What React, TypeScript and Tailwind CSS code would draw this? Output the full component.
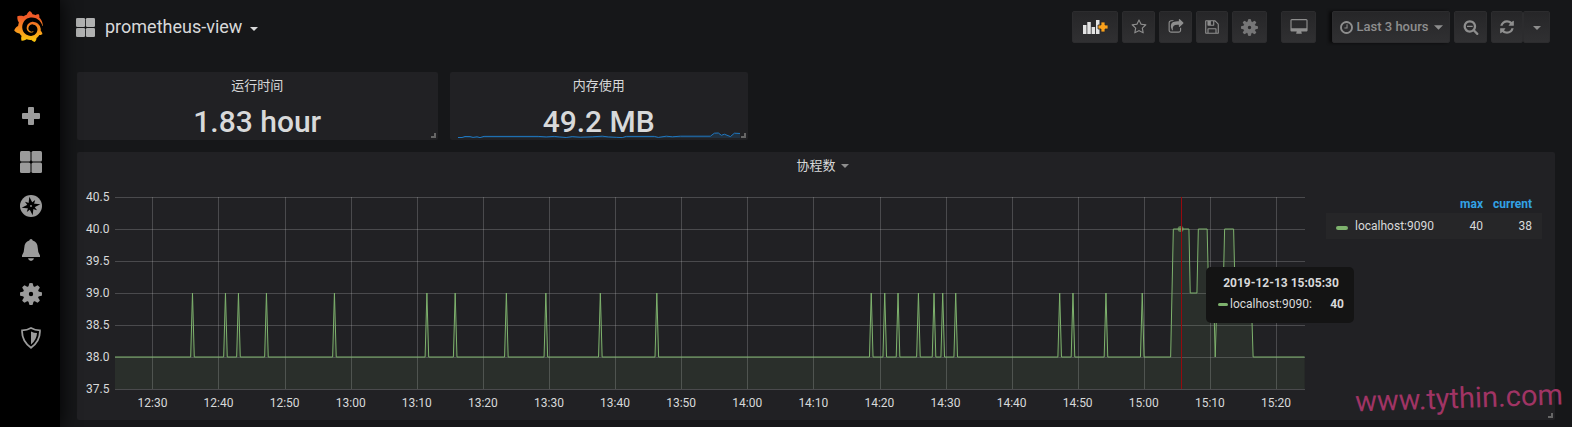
import type { ReactNode } from "react";
import { SiGrafana } from "react-icons/si";

// Plot area: 180 minutes over 1190 units, 37.5 to 40.5 over 192 units
const PLOT_W = 1190;
const PLOT_H = 192;

const Y_TICKS = ["40.5", "40.0", "39.5", "39.0", "38.5", "38.0", "37.5"];
const X_TICKS = [
  "12:30", "12:40", "12:50", "13:00", "13:10", "13:20", "13:30", "13:40", "13:50",
  "14:00", "14:10", "14:20", "14:30", "14:40", "14:50", "15:00", "15:10", "15:20",
];
const X_LINES = [37, 103, 170, 236, 302, 368, 434, 500, 566, 632, 698, 765, 831, 897, 963, 1029, 1095, 1161];

// Short bursts from 38 to 39
const SPIKES = [
  77.5, 110.5, 123.5, 151.5, 219.5, 312, 340.3, 391.5, 431, 485.5, 542,
  756.5, 770, 783.3, 803.7, 819.3, 828, 841, 945, 958.3, 991.3, 1027.6,
];

// The last half hour, where the count goes up to 40
const TAIL: [number, number][] = [
  [1056, 38], [1058.7, 40], [1074.3, 40], [1075.6, 39], [1082.3, 39], [1083.7, 40],
  [1092.5, 40], [1094, 39], [1099, 39], [1100.6, 38], [1102.5, 39], [1108.5, 39],
  [1110, 40], [1119, 40], [1120.5, 39], [1136.5, 39], [1138.5, 38], [PLOT_W, 38],
];

const toY = (value: number) => (40.5 - value) * 64;

const seriesPoints = [
  `0,${toY(38)}`,
  ...SPIKES.map((x) => `${x - 1.8},${toY(38)} ${x},${toY(39)} ${x + 1.8},${toY(38)}`),
  ...TAIL.map(([x, v]) => `${x},${toY(v)}`),
].join(" ");

const STAR =
  "M1201 1004l306-297-422-62-189-382-189 382-422 62 306 297-73 421 378-199 377 199zm527-357q0 22-26 48l-363 354 86 500q1 7 1 20 0 50-41 50-19 0-40-12l-449-236-449 236q-22 12-40 12-21 0-31.500-14.500t-10.500-35.500q0-6 2-20l86-500-364-354q-25-27-25-48 0-37 56-46l502-73 225-455q19-41 49-41t49 41l225 455 502 73q56 9 56 46z";
const SHARE =
  "M1472 989v259q0 119-84.500 203.500t-203.500 84.500h-832q-119 0-203.500-84.500t-84.500-203.500v-832q0-119 84.500-203.500t203.500-84.500h255q13 0 22.500 9.500t9.500 22.500q0 27-26 32-77 26-133 60-10 4-16 4h-112q-66 0-113 47t-47 113v832q0 66 47 113t113 47h832q66 0 113-47t47-113v-214q0-19 18-29 28-13 54-37 16-16 35-8 21 9 21 29zm237-496l-384 384q-18 19-45 19-12 0-25-5-39-17-39-59v-192h-160q-323 0-438 131-119 137-74 473 3 23-20 34-8 2-12 2-16 0-26-13-10-14-21-31t-39.500-68.500-49.500-99.500-38.500-114-17.500-122q0-49 3.500-91t14-90 28-88 47-81.500 68.500-74 94.500-61.500 124.500-48.500 159.500-30.500 196.500-11h160v-192q0-42 39-59 13-5 25-5 26 0 45 19l384 384q19 19 19 45t-19 45z";
const SAVE =
  "M512 1536h768v-384h-768v384zm896 0h128v-896q0-14-10-38.500t-20-34.500l-281-281q-10-10-34-20t-39-10v416q0 40-28 68t-68 28h-576q-40 0-68-28t-28-68v-416h-128v1280h128v-416q0-40 28-68t68-28h832q40 0 68 28t28 68v416zm-384-928v-320q0-13-9.500-22.500t-22.500-9.500h-192q-13 0-22.500 9.500t-9.500 22.500v320q0 13 9.500 22.500t22.500 9.500h192q13 0 22.500-9.500t9.500-22.500zm640 32v928q0 40-28 68t-68 28h-1344q-40 0-68-28t-28-68v-1344q0-40 28-68t68-28h928q40 0 88 20t76 48l280 280q28 28 48 76t20 88z";
const DESKTOP =
  "M1728 992v-832q0-13-9.500-22.500t-22.500-9.500h-1600q-13 0-22.500 9.500t-9.500 22.500v832q0 13 9.500 22.500t22.500 9.500h1600q13 0 22.500-9.500t9.500-22.500zm128-832v1088q0 66-47 113t-113 47h-544q0 37 16 77.500t32 71 16 43.500q0 26-19 45t-45 19h-512q-26 0-45-19t-19-45q0-14 16-44t32-70 16-78h-544q-66 0-113-47t-47-113v-1088q0-66 47-113t113-47h1600q66 0 113 47t47 113z";
const CLOCK =
  "M1024 544v448q0 14-9 23t-23 9h-320q-14 0-23-9t-9-23v-64q0-14 9-23t23-9h224v-352q0-14 9-23t23-9h64q14 0 23 9t9 23zm416 352q0-148-73-273t-198-198-273-73-273 73-198 198-73 273 73 273 198 198 273 73 273-73 198-198 73-273zm224 0q0 209-103 385.500t-279.500 279.500-385.500 103-385.500-103-279.500-279.500-103-385.500 103-385.500 279.500-279.500 385.500-103 385.500 103 279.500 279.500 103 385.500z";
const ZOOM_OUT =
  "M1088 800v64q0 13-9.500 22.500t-22.500 9.500h-576q-13 0-22.500-9.500t-9.500-22.500v-64q0-13 9.500-22.500t22.500-9.500h576q13 0 22.500 9.500t9.500 22.500zm128 32q0-185-131.500-316.500t-316.500-131.500-316.500 131.500-131.500 316.500 131.500 316.500 316.500 131.500 316.500-131.500 131.500-316.500zm512 832q0 53-37.500 90.500t-90.500 37.500q-54 0-90-38l-343-342q-179 124-399 124-143 0-273.500-55.500t-225-150-150-225-55.500-273.500 55.500-273.500 150-225 225-150 273.500-55.500 273.500 55.500 225 150 150 225 55.500 273.500q0 220-124 399l343 343q37 37 37 90z";
const REFRESH =
  "M1639 1056q0 5-1 7-64 268-268 434.500t-478 166.500q-146 0-282.500-55t-243.500-157l-129 129q-19 19-45 19t-45-19-19-45v-448q0-26 19-45t45-19h448q26 0 45 19t19 45-19 45l-137 137q71 66 161 102t187 36q134 0 250-65t186-179q11-17 53-117 8-23 30-23h192q13 0 22.500 9.500t9.500 22.500zm25-800v448q0 26-19 45t-45 19h-448q-26 0-45-19t-19-45 19-45l138-138q-148-137-349-137-134 0-250 65t-186 179q-11 17-53 117-8 23-30 23h-199q-13 0-22.500-9.500t-9.500-22.500v-7q65-268 270-434.500t480-166.500q146 0 284 55.500t245 156.500l130-129q19-19 45-19t45 19 19 45z";

function Glyph({ d, className, viewBox = "0 0 1792 1792" }: { d: string; className: string; viewBox?: string }) {
  return (
    <svg className={className} viewBox={viewBox} fill="currentColor" aria-hidden="true">
      <path d={d} />
    </svg>
  );
}

function Caret({ className }: { className: string }) {
  return (
    <svg className={className} viewBox="0 0 8 4" fill="currentColor" aria-hidden="true">
      <path d="M0 0h8L4 4z" />
    </svg>
  );
}

function GridIcon({ className }: { className: string }) {
  return (
    <svg className={className} viewBox="0 0 22 22" fill="currentColor" aria-hidden="true">
      <rect x="0" y="0" width="10.500" height="10.500" rx="1.500" />
      <rect x="11.500" y="0" width="10.500" height="10.500" rx="1.500" />
      <rect x="0" y="11.500" width="10.500" height="10.500" rx="1.500" />
      <rect x="11.500" y="11.500" width="10.500" height="10.500" rx="1.500" />
    </svg>
  );
}

function GearIcon({ className }: { className: string }) {
  return (
    <svg className={className} viewBox="-11 -11 22 22" fill="currentColor" aria-hidden="true">
      <path
        fillRule="evenodd"
        d="M0-8a8 8 0 1 0 0 16a8 8 0 1 0 0-16zM0-2.200a2.200 2.200 0 1 1 0 4.400a2.200 2.200 0 1 1 0-4.400z"
      />
      {[0, 45, 90, 135, 180, 225, 270, 315].map((angle) => (
        <path key={angle} transform={`rotate(${angle})`} d="M-2.600-7L-1.700-10.800Q0-11.200 1.700-10.800L2.600-7z" />
      ))}
    </svg>
  );
}

function GrafanaLogo() {
  return (
    <>
      <svg className="absolute h-0 w-0" aria-hidden="true">
        <defs>
          <linearGradient id="logo" x1="0" y1="0" x2="0" y2="1">
            <stop offset="0.200" stopColor="#f05a28" />
            <stop offset="0.700" stopColor="#f9a01b" />
            <stop offset="1" stopColor="#fbca0a" />
          </linearGradient>
        </defs>
      </svg>
      <SiGrafana className="h-[31px] w-[31px]" fill="url(#logo)" />
    </>
  );
}

function NavLink({ label, children }: { label: string; children: ReactNode }) {
  return (
    <a href="#" aria-label={label} className="flex h-11 items-center justify-center pl-[2px]">
      {children}
    </a>
  );
}

function Sidebar() {
  return (
    <nav className="z-10 flex w-15 shrink-0 flex-col bg-black text-[#9b9b9b] shadow-[0_0_20px_#000]">
      <a href="#" aria-label="Grafana" className="mb-[42px] flex h-[52px] items-center justify-center pr-1">
        <GrafanaLogo />
      </a>
      <NavLink label="Create">
        <svg className="h-[18px] w-[18px]" viewBox="0 0 18 18" fill="currentColor" aria-hidden="true">
          <path d="M7 0h4q1 0 1 1v5h5q1 0 1 1v4q0 1-1 1h-5v5q0 1-1 1H7q-1 0-1-1v-5H1q-1 0-1-1V7q0-1 1-1h5V1q0-1 1-1z" />
        </svg>
      </NavLink>
      <div className="mt-[2px]">
        <NavLink label="Dashboards">
          <GridIcon className="h-[22px] w-[22px]" />
        </NavLink>
        <NavLink label="Explore">
          <svg className="h-[22px] w-[22px]" viewBox="-11 -11 22 22" aria-hidden="true">
            <circle r="11" fill="currentColor" />
            <g transform="rotate(-10)" fill="#000">
              <path d="M0-9.500L2.200-2.200L9.500 0L2.200 2.200L0 9.500L-2.200 2.200L-9.500 0L-2.200-2.200z" />
              <path d="M5.200-5.200L2.600 0L5.200 5.200L0 2.600L-5.200 5.200L-2.600 0L-5.200-5.200L0-2.600z" />
            </g>
            <circle r="0.900" fill="currentColor" />
          </svg>
        </NavLink>
        <NavLink label="Alerting">
          <svg className="h-[22px] w-[18px]" viewBox="0 0 18 22" fill="currentColor" aria-hidden="true">
            <path d="M9 0Q10.500 0 10.700 1.600Q15.500 3 15.700 8.500Q15.800 13.500 18 16.500V18H0V16.500Q2.200 13.500 2.300 8.500Q2.500 3 7.300 1.600Q7.500 0 9 0z" />
            <path d="M6 19.300H12Q11.500 22 9 22T6 19.300z" />
          </svg>
        </NavLink>
        <NavLink label="Configuration">
          <GearIcon className="h-[22px] w-[22px]" />
        </NavLink>
        <NavLink label="Server Admin">
          <svg className="h-[22px] w-5" viewBox="0 0 20 22" aria-hidden="true">
            <path
              d="M10 1Q14 3.300 18.900 3.300Q19.500 14 10 20.800Q0.500 14 1.100 3.300Q6 3.300 10 1z"
              fill="none"
              stroke="currentColor"
              strokeWidth="1.800"
            />
            <path d="M10 4.500Q13 6 16 6Q15.800 12.500 10 17.500z" fill="currentColor" />
          </svg>
        </NavLink>
      </div>
    </nav>
  );
}

function ToolButton({ label, className, children }: { label: string; className: string; children: ReactNode }) {
  return (
    <button
      type="button"
      aria-label={label}
      className={`flex h-8 items-center justify-center rounded-xs border border-[#2c2c2e] bg-linear-to-b from-[#262628] to-[#303032] text-[#8e8e8e] ${className}`}
    >
      {children}
    </button>
  );
}

function Toolbar() {
  return (
    <header className="flex items-center justify-between pt-[11px] pr-[5px]">
      <button type="button" className="-ml-px flex h-8 items-center text-lg leading-6 text-[#d8d9da]">
        <GridIcon className="mr-[10px] h-[19px] w-[19px] text-[#b0b1b1]" />
        prometheus-view
        <Caret className="mt-1 ml-2 h-1 w-2" />
      </button>

      <div className="flex items-center gap-1">
        <ToolButton label="Add panel" className="w-[46px]">
          <svg className="h-[14px] w-[25px]" viewBox="0 0 25 14" aria-hidden="true">
            <path fill="#e3e3e3" d="M0 5h3.500v9H0zM4.300 2h3.500v12H4.300zM8.600 7h3.500v7H8.600zM13 0h3.500v14H13z" />
            <path
              fill="#f9a01b"
              stroke="#29292b"
              strokeWidth="0.800"
              d="M18 2h4v3h3v4h-3v3h-4V9h-3V5h3z"
            />
          </svg>
        </ToolButton>
        <ToolButton label="Mark as favorite" className="w-[33px]">
          <Glyph d={STAR} className="h-4 w-4" />
        </ToolButton>
        <ToolButton label="Share dashboard" className="w-[33px]">
          <Glyph d={SHARE} className="h-4 w-4" />
        </ToolButton>
        <ToolButton label="Save dashboard" className="w-8">
          <Glyph d={SAVE} className="h-4 w-4" />
        </ToolButton>
        <ToolButton label="Dashboard settings" className="w-[35px]">
          <GearIcon className="h-[17px] w-[17px] text-[#767677]" />
        </ToolButton>
        <ToolButton label="Cycle view mode" className="mx-[10px] w-[35px]">
          <Glyph d={DESKTOP} viewBox="-64 0 1920 1792" className="h-4 w-[18px]" />
        </ToolButton>
        <ToolButton label="Time range" className="ml-[2px] w-[118px] text-[13px] font-medium shadow-[-3px_0_3px_#0a0a0b]">
          <Glyph d={CLOCK} className="mr-[2px] h-[15px] w-[15px]" />
          Last 3 hours
          <Caret className="ml-[5px] h-[5px] w-[9px]" />
        </ToolButton>
        <ToolButton label="Zoom out" className="w-[33px]">
          <Glyph d={ZOOM_OUT} className="h-4 w-4" />
        </ToolButton>
        <div className="flex">
          <ToolButton label="Refresh" className="w-8">
            <Glyph d={REFRESH} className="h-4 w-4" />
          </ToolButton>
          <ToolButton label="Refresh interval" className="w-[27px]">
            <Caret className="mt-px h-1 w-2" />
          </ToolButton>
        </div>
      </div>
    </header>
  );
}

function Panel({ title, className, children }: { title: ReactNode; className: string; children: ReactNode }) {
  return (
    <section className={`relative flex flex-col rounded-xs bg-[#212124] ${className}`}>
      <h2 className="flex h-7 shrink-0 items-center justify-center text-[13px] leading-4">{title}</h2>
      {children}
      {/* resize handle */}
      <span className="absolute right-[2px] bottom-[2px] h-[5px] w-[5px] border-r-2 border-b-2 border-[#666]" />
    </section>
  );
}

function Stat({ children }: { children: ReactNode }) {
  return <p className="relative text-center text-[30px] leading-[44px] font-medium">{children}</p>;
}

function Sparkline() {
  return (
    <svg
      className="absolute inset-x-2 bottom-0 h-2 w-[calc(100%-16px)]"
      viewBox="0 0 282 8"
      preserveAspectRatio="none"
      aria-hidden="true"
    >
      <path
        d="M0 5.500H4L7 4.500L12 4.600L15 5.400L19 4.800L22 5.600L26 4.400H80L88 4.900L96 4.400L101 4.900L108 5.500L114 4.600L122 5.200L134 4.800L144 4.200L150 4.900L158 5.300L164 5.600L168 4.400H196L200 5.400L208 4.200L214 4.800L222 4.200H252L256 1.200L260 1L263 3.300L266 2.200L272 4.600L276 1.200L282 1.500V6H0z"
        fill="rgba(31,120,193,0.180)"
      />
      <path
        d="M0 5.500H4L7 4.500L12 4.600L15 5.400L19 4.800L22 5.600L26 4.400H80L88 4.900L96 4.400L101 4.900L108 5.500L114 4.600L122 5.200L134 4.800L144 4.200L150 4.900L158 5.300L164 5.600L168 4.400H196L200 5.400L208 4.200L214 4.800L222 4.200H252L256 1.200L260 1L263 3.300L266 2.200L272 4.600L276 1.200L282 1.500"
        fill="none"
        stroke="#1f78c1"
        vectorEffect="non-scaling-stroke"
      />
    </svg>
  );
}

function Graph() {
  return (
    <div className="flex min-w-0 flex-1">
      <div className="mt-[10px] flex h-[206px] flex-col justify-between pr-[6px] pl-[9px] text-right text-xs leading-[14px]">
        {Y_TICKS.map((tick) => (
          <span key={tick}>{tick}</span>
        ))}
      </div>
      <div className="relative min-w-0 flex-1 pt-[17px]">
        <svg
          className="block h-[193px] w-full"
          viewBox={`0 0 ${PLOT_W} ${PLOT_H + 1}`}
          preserveAspectRatio="none"
          role="img"
          aria-label="协程数"
        >
          <g fill="rgb(200,200,200)" fillOpacity="0.250" shapeRendering="crispEdges">
            {Y_TICKS.map((tick, i) => (
              <rect key={tick} x="0" y={i * 32} width={PLOT_W} height="1" />
            ))}
            {X_LINES.map((x) => (
              <rect key={x} x={x} y="0" width="1" height={PLOT_H} />
            ))}
          </g>
          <polygon points={`0,${PLOT_H} ${seriesPoints} ${PLOT_W},${PLOT_H}`} fill="#7eb26d" fillOpacity="0.100" />
          <polyline points={seriesPoints} fill="none" stroke="#7eb26d" vectorEffect="non-scaling-stroke" />
          <circle cx="1066" cy={toY(40)} r="3" fill="#7eb26d" fillOpacity="0.600" />
          <rect x="1066" y="0" width="1" height={PLOT_H} fill="#960a0e" shapeRendering="crispEdges" />
        </svg>
        <div className="mr-[-4px] ml-1 grid grid-cols-18 pt-[6px] text-center text-xs leading-[14px]">
          {X_TICKS.map((tick) => (
            <span key={tick}>{tick}</span>
          ))}
        </div>

        <div
          role="tooltip"
          className="absolute top-[87px] right-[-49px] z-10 w-[148px] rounded-[5px] bg-[#141414] pt-2 pr-[10px] pb-[11px] pl-3 text-xs leading-4"
        >
          <p className="text-center font-bold">2019-12-13 15:05:30</p>
          <p className="mt-[5px] flex items-center">
            <span className="mr-[2px] h-[3px] w-[10px] rounded-xs bg-[#7eb26d]" />
            localhost:9090:
            <b className="ml-auto">40</b>
          </p>
        </div>
      </div>
    </div>
  );
}

function Legend() {
  return (
    <table className="mt-[15px] mr-[13px] ml-[21px] w-[216px] self-start text-xs leading-4">
      <thead>
        <tr className="h-[18px] text-right text-[#33a2e5]">
          <td />
          <th scope="col" className="font-bold">max</th>
          <th scope="col" className="pr-[10px] font-bold">current</th>
        </tr>
      </thead>
      <tbody>
        <tr className="h-[26px] bg-[#262628] text-right">
          <th scope="row" className="pl-[10px] text-left font-normal">
            <span className="flex items-center">
              <span className="mt-1 mr-[7px] h-1 w-3 rounded-xs bg-[#7eb26d]" />
              localhost:9090
            </span>
          </th>
          <td className="w-12">40</td>
          <td className="w-[59px] pr-[10px]">38</td>
        </tr>
      </tbody>
    </table>
  );
}

export default function App() {
  return (
    <div className="flex min-h-screen overflow-hidden bg-[#161719] font-['Roboto','Noto_Sans_CJK_SC',sans-serif] text-[#d8d9da]">
      <Sidebar />
      <main className="relative min-w-0 flex-1 pr-[17px] pb-[7px] pl-[17px]">
        <Toolbar />
        <div className="mt-[29px] grid grid-cols-24 gap-3">
          <Panel title="运行时间" className="col-span-6 h-17">
            <Stat>1.83 hour</Stat>
          </Panel>
          <Panel title="内存使用" className="col-span-5 h-17">
            <Sparkline />
            <Stat>49.2 MB</Stat>
          </Panel>
          <Panel
            title={
              <>
                协程数
                <Caret className="-mr-[13px] ml-[5px] h-1 w-2 text-[#8e8e8e]" />
              </>
            }
            className="col-span-24 pb-[10px]"
          >
            <div className="flex">
              <Graph />
              <Legend />
            </div>
          </Panel>
        </div>
        <span className="absolute right-[9px] bottom-[13px] rotate-[-2deg] text-[29px] leading-8 text-[#a03464]">
          www.tythin.com
        </span>
      </main>
    </div>
  );
}
